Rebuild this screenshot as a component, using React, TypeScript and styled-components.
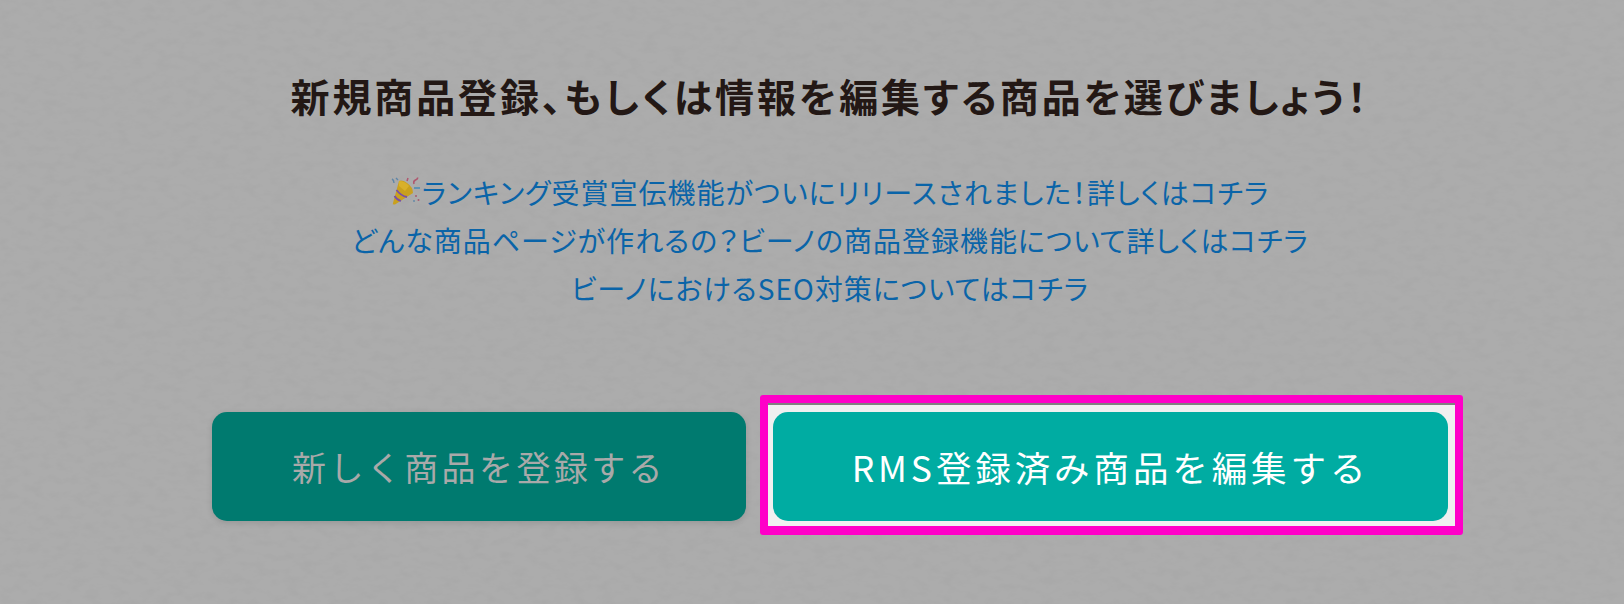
import React from "react";
import styled, { createGlobalStyle } from "styled-components";

const Global = createGlobalStyle`
  html, body { margin: 0; padding: 0; }
  body { width: 1624px; height: 604px; overflow: hidden; background: #acacac; font-family: "Noto Sans CJK JP", "Noto Sans", sans-serif; }
`;

const Page = styled.main`
  width: 1624px;
  height: 604px;
  box-sizing: border-box;
  padding: 67px 0 0 36px;
  display: flex;
  flex-direction: column;
  align-items: center;
  position: relative;
`;

const Texture = styled.svg`
  position: absolute;
  inset: 0;
  width: 100%;
  height: 100%;
  pointer-events: none;
`;

const Title = styled.h1`
  position: relative;
  margin: 0;
  font-size: 39px;
  line-height: 56px;
  font-weight: 700;
  letter-spacing: 2.9px;
  font-feature-settings: "palt";
  color: #231815;
`;

const LinkList = styled.div`
  position: relative;
  margin-top: 45px;
  display: flex;
  flex-direction: column;
  align-items: center;
`;

const InfoLink = styled.a`
  display: flex;
  align-items: center;
  height: 48px;
  font-size: 28px;
  letter-spacing: 1px;
  font-feature-settings: "palt";
  color: #0a64a8;
  text-decoration: none;
`;

const Actions = styled.div`
  position: relative;
  margin-top: 100px;
  display: flex;
  gap: 27px;
`;

const Highlight = styled.div`
  position: absolute;
  left: 548px;
  top: -17px;
  width: 703px;
  height: 140px;
  box-sizing: border-box;
  border: 8px solid #ff00c8;
  border-bottom-width: 9px;
  border-radius: 3px;
  background: #f0f0f0;
  box-shadow: inset 0 2px 0 #808080;
`;

const ActionButton = styled.button<{ $active?: boolean }>`
  position: relative;
  height: 109px;
  width: ${(p) => (p.$active ? "675px" : "534px")};
  border: 0;
  border-radius: 15px;
  padding: 0;
  font-family: inherit;
  font-size: ${(p) => (p.$active ? "35.5px" : "34px")};
  font-weight: 400;
  letter-spacing: ${(p) => (p.$active ? "3.9px" : "3.4px")};
  background: ${(p) => (p.$active ? "#00aca2" : "#007a6f")};
  color: ${(p) => (p.$active ? "#ffffff" : "#a9a9a9")};
  box-shadow: ${(p) => (p.$active ? "none" : "0 2px 6px rgba(0,0,0,.12)")};
`;

const Popper = () => (
  <svg width="31" height="32" viewBox="0 0 31 32" style={{ flex: "none" }}>
    <path d="M2 27 Q1 29 4 28.5 L22 17 Q22 11 16 7 Q11 3.5 8 5 Z" fill="#c9a01e" />
    <path d="M8 5 Q14 5 18 10 L14 15 L8 10 Z" fill="#d8b02a" />
    <path d="M5.5 14 Q10 20 16 21 M3.5 20 Q6 24 10 25" stroke="#7a4fa6" strokeWidth="1.8" fill="none" />
    <path d="M1 3 q2 1 2 4 M5 2 l2 2" stroke="#5f86a8" strokeWidth="1.4" fill="none" />
    <path d="M23 8 q-1 -3 1.5 -4 t2 -2.5 M16 5 l1 -3" stroke="#b0566e" strokeWidth="1.5" fill="none" />
    <path d="M23 12 h6" stroke="#4f8cb4" strokeWidth="1.6" />
    <circle cx="25" cy="20" r="1" fill="#a85a70" />
    <circle cx="27.5" cy="24" r="1" fill="#a85a70" />
    <circle cx="23" cy="25" r=".9" fill="#5f86a8" />
  </svg>
);

export default function App() {
  return (
    <>
      <Global />
      <Page>
        <Texture aria-hidden="true">
          <filter id="grain">
            <feTurbulence type="fractalNoise" baseFrequency="0.07 0.13" numOctaves="3" seed="7" />
            <feColorMatrix values="0 0 0 0 0  0 0 0 0 0  0 0 0 0 0  0.6 0 0 0 -0.22" />
          </filter>
          <rect width="100%" height="100%" filter="url(#grain)" opacity="0.05" />
        </Texture>
        <Title>新規商品登録、もしくは情報を編集する商品を選びましょう！</Title>
        <LinkList>
          <InfoLink href="#"><Popper />ランキング受賞宣伝機能がついにリリースされました！詳しくはコチラ</InfoLink>
          <InfoLink href="#">どんな商品ページが作れるの？ビーノの商品登録機能について詳しくはコチラ</InfoLink>
          <InfoLink href="#">ビーノにおけるSEO対策についてはコチラ</InfoLink>
        </LinkList>
        <Actions>
          <Highlight />
          <ActionButton>新しく商品を登録する</ActionButton>
          <ActionButton $active>RMS登録済み商品を編集する</ActionButton>
        </Actions>
      </Page>
    </>
  );
}
